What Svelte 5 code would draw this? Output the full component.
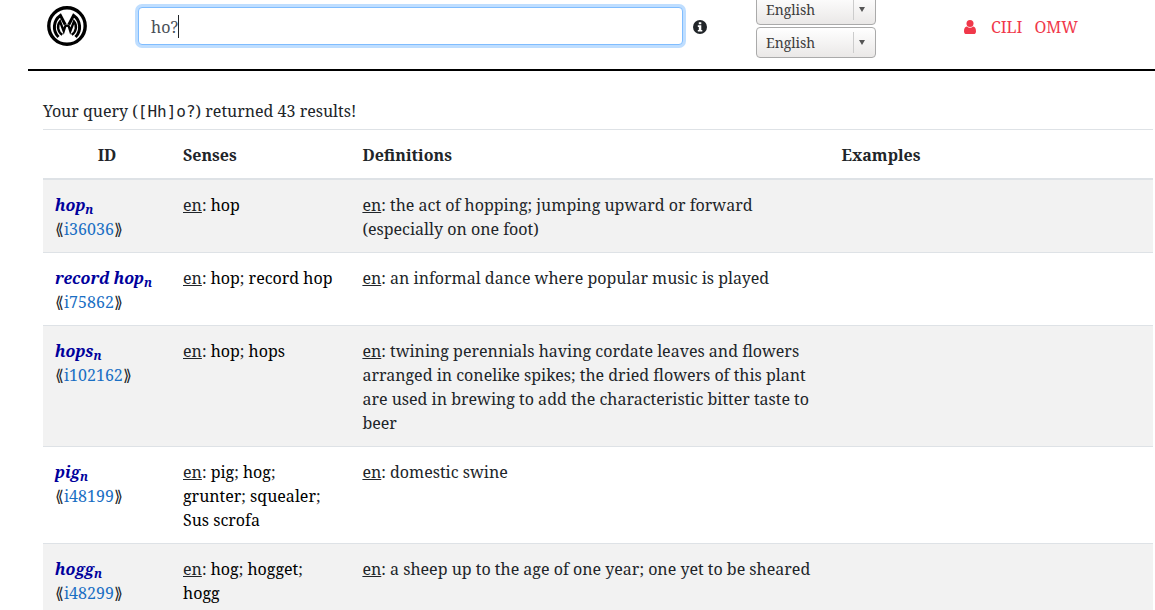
<script>
  import { onMount } from 'svelte';

  let query = $state('ho?');
  let field;
  let caret = $state(0);

  const languages = ['English', 'Japanese', 'Indonesian'];

  const rows = [
    { name: 'hop', id: 'i36036', senses: ['hop'], definition: 'the act of hopping; jumping upward or forward (especially on one foot)' },
    { name: 'record hop', id: 'i75862', senses: ['hop', 'record hop'], definition: 'an informal dance where popular music is played' },
    { name: 'hops', id: 'i102162', senses: ['hop', 'hops'], definition: 'twining perennials having cordate leaves and flowers arranged in conelike spikes; the dried flowers of this plant are used in brewing to add the characteristic bitter taste to beer' },
    { name: 'pig', id: 'i48199', senses: ['pig', 'hog', 'grunter', 'squealer', 'Sus scrofa'], definition: 'domestic swine' },
    { name: 'hogg', id: 'i48299', senses: ['hog', 'hogget', 'hogg'], definition: 'a sheep up to the age of one year; one yet to be sheared' }
  ];

  // The caret is drawn by hand, at the measured end of the text before it.
  function placeCaret() {
    const ctx = document.createElement('canvas').getContext('2d');
    ctx.font = getComputedStyle(field).font;
    caret = Math.round(ctx.measureText(field.value.slice(0, field.selectionStart)).width);
  }

  onMount(() => {
    field.focus();
    field.setSelectionRange(query.length, query.length);
    placeCaret();
  });
</script>

<div class="page">
  <header>
    <a class="logo" href="#home" aria-label="Home">
      <svg viewBox="0 0 40 40" width="40" height="40" fill="none" stroke="#000">
        <circle cx="20" cy="20" r="18.2" stroke-width="3.4" />
        <path d="M11.5 31A14.2 14.2 0 0 1 13.4 9.4L18.2 18.6" stroke-width="3" />
        <path d="M28.5 31A14.2 14.2 0 0 0 26.6 9.4L21.8 18.6" stroke-width="3" />
        <path d="M17.8 19.7H22.2" stroke-width="2.4" />
        <path d="M15.3 28.8A9.2 9.2 0 0 1 13 15.4L16.7 25.2L18.5 19.5" stroke-width="2.4" />
        <path d="M24.7 28.8A9.2 9.2 0 0 0 27 15.4L23.3 25.2L21.5 19.5" stroke-width="2.4" />
      </svg>
    </a>
    <div class="search">
      <div class="field">
        <input type="text" aria-label="Search" bind:value={query} bind:this={field} oninput={placeCaret} onkeyup={placeCaret} onclick={placeCaret} />
        <span class="caret" style:margin-left="{caret}px"></span>
      </div>
      <button class="info" type="button" aria-label="Search help">
        <svg viewBox="0 0 14 14" width="14" height="14">
          <circle cx="7" cy="7" r="7" fill="#212529" />
          <path d="M5.8 2.2h2.5v2H5.8zM4.8 5.3h3.5v4.6h1v1.7H4.8V9.9h1V7h-1z" fill="#fff" />
        </svg>
      </button>
    </div>
    <div class="langs">
      {#each ['Primary language', 'Secondary language'] as label}
        <div class="select">
          <select aria-label={label}>
            {#each languages as language}<option>{language}</option>{/each}
          </select>
        </div>
      {/each}
    </div>
    <nav>
      <a href="#login" aria-label="Log in">
        <svg viewBox="0 0 12 14" width="12" height="14" fill="currentColor">
          <circle cx="6" cy="3.6" r="3.5" />
          <path d="M2.9 6.6C4.6 8.2 7.4 8.2 9.1 6.6C11.2 6.8 12 8.8 12 11.4C12 13 11 14 9.7 14H2.3C1 14 0 13 0 11.4C0 8.8.8 6.8 2.9 6.6z" />
        </svg>
      </a>
      <a href="#cili">CILI</a>
      <a href="#omw">OMW</a>
    </nav>
  </header>

  <main>
    <p>Your query (<code>[Hh]o?</code>) returned 43 results!</p>
    <table>
      <thead>
        <tr><th class="id">ID</th><th class="senses">Senses</th><th class="defs">Definitions</th><th>Examples</th></tr>
      </thead>
      <tbody>
        {#each rows as row}
          <tr>
            <td><strong>{row.name}<sub>n</sub></strong><br />⟪<a href="#{row.id}">{row.id}</a>⟫</td>
            <td><u>en</u>: {#each row.senses as sense, i}{i ? '; ' : ''}<a class="sense" href="#{sense}">{sense}</a>{/each}</td>
            <td><u>en</u>: {row.definition}</td>
            <td></td>
          </tr>
        {/each}
      </tbody>
    </table>
  </main>
</div>

<style>
  :global(body) {
    margin: 0;
    overflow: hidden;
    background: #fff;
  }
  .page {
    margin-left: 28px;
    font: 16px/24px "Noto Serif", "Droid Serif", "DejaVu Serif Condensed", serif;
    color: #212529;
  }
  a {
    color: #1a6fc4;
    text-decoration: none;
  }
  header {
    display: grid;
    grid-template-columns: 110px 31fr 120px 14fr;
    grid-template-rows: 52px;
    align-items: center;
    padding-bottom: 17px;
    border-bottom: 2px solid #000;
  }
  .logo {
    display: flex;
    padding-left: 19px;
  }
  .search {
    display: flex;
    align-items: center;
    gap: 10px;
    padding-right: 49px;
  }
  .field {
    position: relative;
    display: flex;
    flex: 1;
  }
  .caret {
    position: absolute;
    left: 13px;
    top: 8px;
    bottom: 7px;
    border-left: 1px solid #212529;
    visibility: hidden;
  }
  input:focus + .caret {
    visibility: visible;
  }
  input {
    flex: 1;
    min-width: 0;
    height: 38px;
    box-sizing: border-box;
    padding: 7px 12px 5px;
    border: 1px solid #80bdff;
    border-radius: 4px;
    outline: 0;
    box-shadow: 0 0 0 3px #bfdeff;
    color: #495057;
    caret-color: transparent;
    font: inherit;
  }
  .info {
    display: flex;
    padding: 2px 0 0;
    border: 0;
    background: none;
  }
  .langs {
    display: grid;
    gap: 2px;
  }
  .select {
    position: relative;
  }
  .select::before {
    content: "";
    position: absolute;
    right: 22px;
    top: 5px;
    bottom: 5px;
    border-left: 1px solid #ccc;
  }
  .select::after {
    content: "";
    position: absolute;
    right: 11px;
    top: 13px;
    border: 3px solid transparent;
    border-top: 5px solid #555;
    border-bottom: 0;
  }
  select {
    display: block;
    appearance: none;
    width: 100%;
    height: 31px;
    padding: 0 9px;
    border: 1px solid #aaa;
    border-radius: 4px;
    background: linear-gradient(#fff, #eae8e7);
    color: #3c3c3c;
    font: inherit;
    font-size: 14px;
  }
  nav {
    display: flex;
    align-items: center;
    gap: 12px;
    padding: 2px 0 0 88px;
  }
  nav a {
    color: #f0384a;
  }
  nav a:first-child {
    display: flex;
    margin-right: 3px;
  }
  main {
    padding: 28px 2px 0 15px;
  }
  p {
    margin: 0 0 6px;
  }
  code {
    font: 16px "DejaVu Sans Mono", monospace;
    line-height: 1;
  }
  table {
    width: 100%;
    table-layout: fixed;
    border-collapse: collapse;
  }
  th,
  td {
    padding: 13px 12px 11px;
    border-top: 1px solid #dee2e6;
    text-align: left;
    vertical-align: top;
  }
  thead th {
    border-bottom: 2px solid #dee2e6;
  }
  th.id {
    width: 104px;
    text-align: center;
  }
  th.senses {
    width: 14%;
  }
  th.defs {
    width: 41%;
  }
  tbody tr:nth-child(odd) {
    background: #f2f2f2;
  }
  strong {
    color: #00009c;
    font-style: italic;
  }
  sub {
    position: relative;
    bottom: -3px;
    font-size: 12px;
    line-height: 0;
    vertical-align: baseline;
  }
  .sense {
    color: #000;
  }
</style>
